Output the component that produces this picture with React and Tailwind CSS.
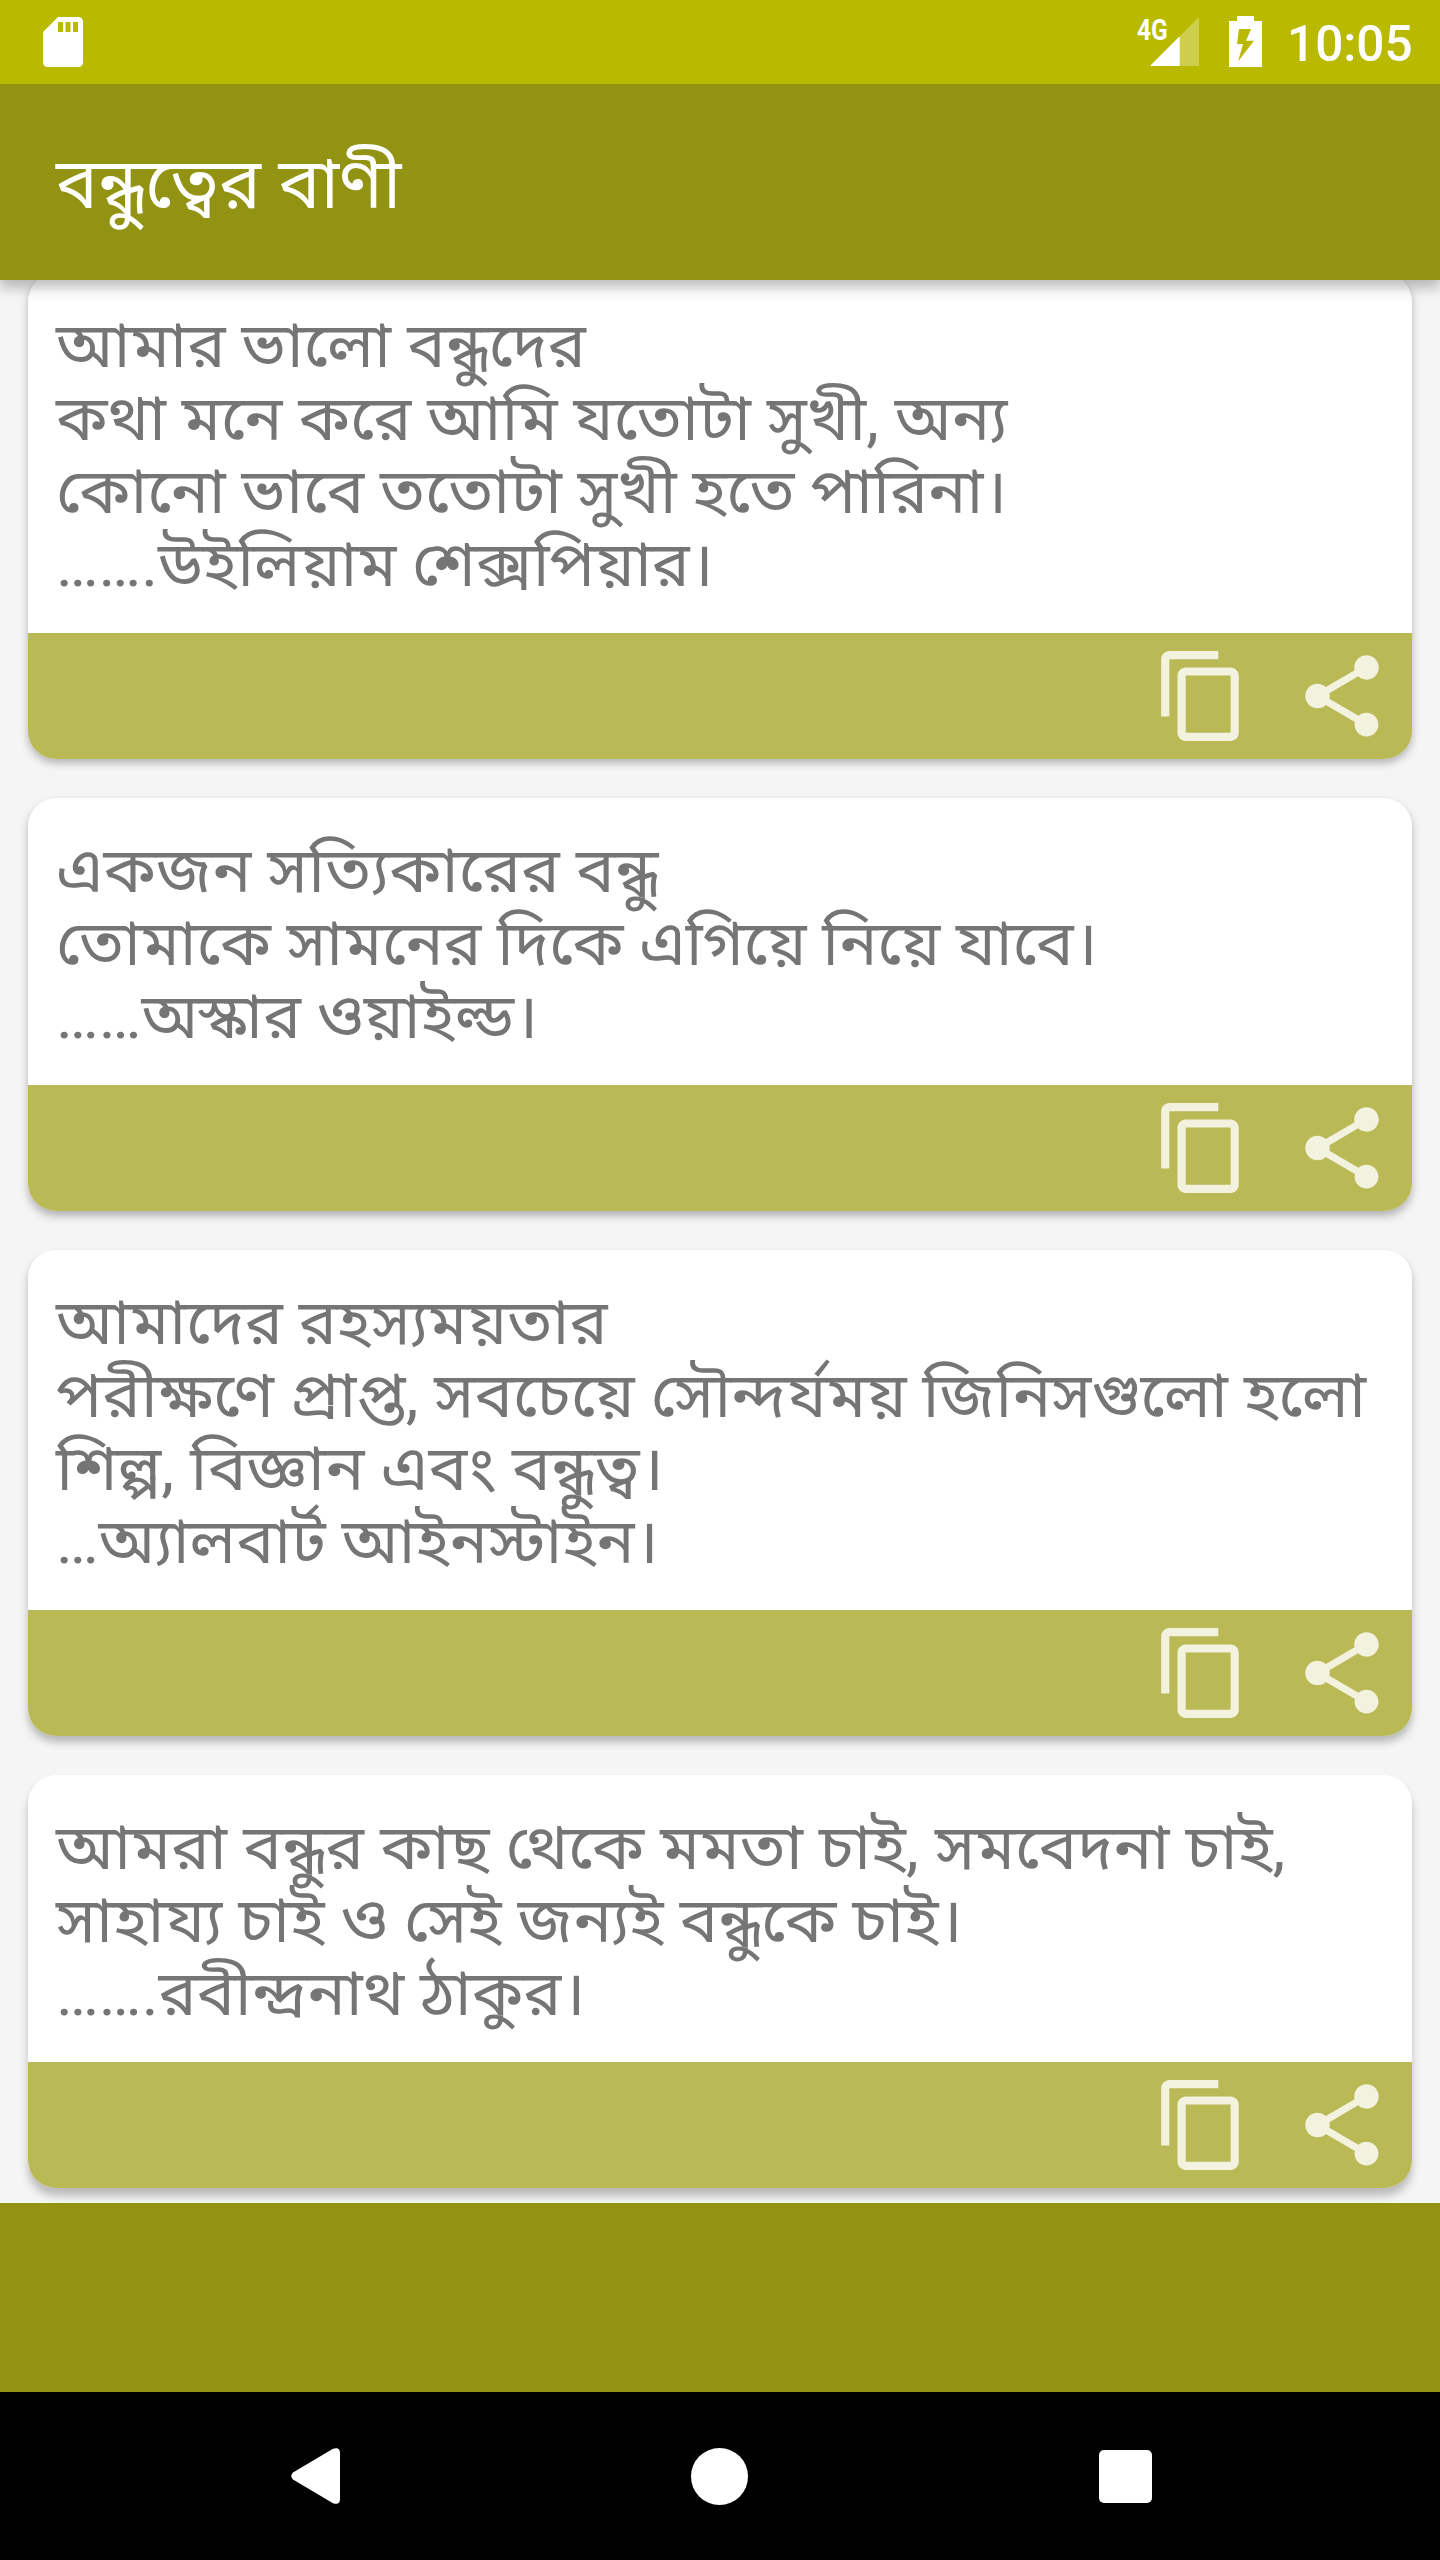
const quotes = [
  {
    id: 1,
    shadow: "shadow-[0_4px_8px_rgba(0,0,0,0.28)]",
    lines: [
      ["আমার ভালো বন্ধুদের", 1.022],
      ["কথা মনে করে আমি যতোটা সুখী, অন্য", 1.016],
      ["কোনো ভাবে ততোটা সুখী হতে পারিনা।", 1.012],
      ["…….উইলিয়াম শেক্সপিয়ার।", 1.01],
    ],
  },
  {
    id: 2,
    shadow: "shadow-[0_5px_8px_rgba(0,0,0,0.28)]",
    lines: [
      ["একজন সত্যিকারের বন্ধু", 1.033],
      ["তোমাকে সামনের দিকে এগিয়ে নিয়ে যাবে।", 1.0095],
      ["……অস্কার ওয়াইল্ড।", 1.013],
    ],
  },
  {
    id: 3,
    shadow: "shadow-[0_6px_8px_rgba(0,0,0,0.26)]",
    lines: [
      ["আমাদের রহস্যময়তার", 1.015],
      ["পরীক্ষণে প্রাপ্ত, সবচেয়ে সৌন্দর্যময় জিনিসগুলো হলো", 1.024],
      ["শিল্প, বিজ্ঞান এবং বন্ধুত্ব।", 1.036],
      ["…অ্যালবার্ট আইনস্টাইন।", 1.011],
    ],
  },
  {
    id: 4,
    shadow: "shadow-[0_8px_8px_rgba(0,0,0,0.24)]",
    lines: [
      ["আমরা বন্ধুর কাছ থেকে মমতা চাই, সমবেদনা চাই,", 1.031],
      ["সাহায্য চাই ও সেই জন্যই বন্ধুকে চাই।", 1.022],
      ["…….রবীন্দ্রনাথ ঠাকুর।", 1.016],
    ],
  },
];

function CopyIcon() {
  return (
    <svg className="size-[98px]" viewBox="0 0 24 24" fill="currentColor">
      <path d="M16 1H4c-1.1 0-2 .9-2 2v14h2V3h12V1zm3 4H8c-1.1 0-2 .9-2 2v14c0 1.1.9 2 2 2h11c1.1 0 2-.9 2-2V7c0-1.1-.9-2-2-2zm0 16H8V7h11v14z" />
    </svg>
  );
}

function ShareIcon() {
  return (
    <svg className="size-[98px]" viewBox="0 0 24 24" fill="currentColor">
      <path d="M18 16.08c-.76 0-1.44.3-1.96.77L8.91 12.7c.05-.23.09-.46.09-.7s-.04-.47-.09-.7l7.05-4.11c.54.5 1.25.81 2.04.81 1.66 0 3-1.34 3-3s-1.34-3-3-3-3 1.34-3 3c0 .24.04.47.09.7L8.04 9.81C7.5 9.31 6.79 9 6 9c-1.66 0-3 1.34-3 3s1.34 3 3 3c.79 0 1.5-.31 2.04-.81l7.12 4.16c-.05.21-.08.43-.08.65 0 1.61 1.31 2.92 2.92 2.92s2.92-1.31 2.92-2.92-1.31-2.92-2.92-2.92z" />
    </svg>
  );
}

function QuoteCard({ quote }) {
  return (
    <article className={`overflow-hidden rounded-[28px] bg-white ${quote.shadow}`}>
      <div className="flex flex-col items-start px-[28px] pt-[36px] pb-[32px] text-[63px] leading-[73px] font-normal text-[#757575]">
        {quote.lines.map(([line, stretch]) => (
          <p key={line} className="origin-left whitespace-nowrap" style={{ transform: `scaleX(${stretch})` }}>
            {line}
          </p>
        ))}
      </div>
      <div className="flex h-[126px] items-center justify-end gap-[42px] bg-[#b9b955] pr-[21px] text-[#f3f2de]">
        <CopyIcon />
        <ShareIcon />
      </div>
    </article>
  );
}

function StatusBar() {
  return (
    <div className="flex h-[84px] items-start bg-[#b9b900] pt-4 text-white">
      <svg className="mt-px ml-[43px] h-[50px] w-[40px]" viewBox="0 0 40 50">
        <path d="M15 0H35.500a4.500 4.500 0 0 1 4.500 4.500V45.500a4.500 4.500 0 0 1-4.500 4.500H4.500a4.500 4.500 0 0 1-4.500-4.500V15Z" fill="#fff" />
        <path d="M15 5h5v10h-5zM22.500 5h5v10h-5zM30 5h5v10h-5z" fill="#b9b900" />
      </svg>
      <span className="ml-[1054px] w-[13px] origin-left scale-x-[0.83] text-[29.500px] leading-[28px] font-bold">4G</span>
      <svg className="mt-px h-[49px] w-[49px]" viewBox="0 0 49 49">
        <path d="M49 0V49H0Z" fill="#fff" opacity="0.3" />
        <path d="M29.700 19.300V49H0Z" fill="#fff" />
      </svg>
      <svg className="ml-[30px] h-[51px] w-[33px]" viewBox="0 0 33 51">
        <path d="M8 0h17v5h8v46H0V5h8z" fill="#fff" />
        <path d="M10 13h12l-5 11.700h8L9 45.500l5-17.500H8z" fill="#b9b900" />
      </svg>
      <span className="ml-[25px] text-[49.500px] leading-[57px] font-medium">10:05</span>
    </div>
  );
}

export default function App() {
  return (
    <div className="flex h-[2560px] w-[1440px] flex-col overflow-hidden bg-[#f5f5f5] font-[Roboto,'Noto_Sans_Bengali','Noto_Sans',sans-serif]">
      <header className="relative z-10 bg-[#939313] text-white shadow-[0_8px_12px_rgba(0,0,0,0.25)]">
        <StatusBar />
        <div className="flex h-[196px] items-center px-[56px] pt-[4px]">
          <h1 className="origin-left scale-x-[1.006] text-[70px] leading-[82px] font-normal whitespace-nowrap">বন্ধুত্বের বাণী</h1>
        </div>
      </header>
      <main className="min-h-0 flex-1 overflow-hidden px-[28px]">
        <div className="-mt-[7px] flex flex-col gap-[39px]">
          {quotes.map((quote) => (
            <QuoteCard key={quote.id} quote={quote} />
          ))}
        </div>
      </main>
      <footer className="h-[189px] bg-[#939313]" />
      <nav className="flex h-[168px] items-center bg-black pl-[291px]">
        <svg className="h-[56px] w-[49px]" viewBox="0 0 49 56">
          <path d="M2 24.500 42 .8Q49-1.500 49 5V51Q49 57.500 42 55.200L2 31.500Q-1.500 28 2 24.500Z" fill="#fff" />
        </svg>
        <div className="ml-[351px] size-[57px] rounded-full bg-white" />
        <div className="ml-[351px] h-[53px] w-[53px] rounded-[5px] bg-white" />
      </nav>
    </div>
  );
}
